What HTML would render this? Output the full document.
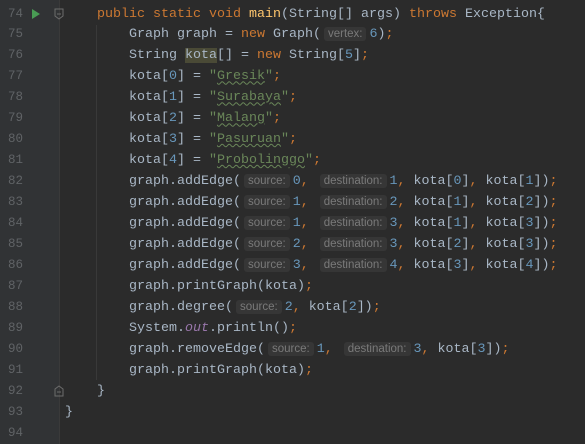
<!DOCTYPE html>
<html><head><style>
body{margin:0;width:585px;height:444px;background:#2b2b2b;overflow:hidden;font-family:"Liberation Mono",monospace;font-size:13.33px;position:relative}
.g{position:absolute;left:0;top:0;width:59px;height:444px;background:#313335;border-right:1px solid #3a3a3a}
.ln{position:absolute;left:0;width:23px;text-align:right;color:#606366;font-size:12.5px;height:21px;line-height:21px}
.l{position:absolute;left:65px;white-space:pre;color:#a9b7c6;height:21px;line-height:21px}
.k{color:#cc7832}.n{color:#6897bb}.s{color:#6a8759}.m{color:#ffc66d}.f{color:#9876aa;font-style:italic}
.h{font-family:"Liberation Sans",sans-serif;font-size:11.5px;color:#7a7a7a;background:#363636;border-radius:3px;padding:1px 4px;margin:0 3px}
.u{text-decoration:underline wavy #6a8759;text-decoration-thickness:1px}
.hl{background:#4a4a36}
.guide{position:absolute;width:1px;background:#393939}
</style></head><body>
<div class="g"></div>
<div class="guide" style="left:96px;top:25px;height:355px"></div>
<svg style="position:absolute;left:54px;top:8px" width="10" height="12"><path d="M1 1H9V8L5 11L1 8Z" fill="none" stroke="#6c6c6c"/><path d="M3 6H7" stroke="#6c6c6c"/></svg>
<svg style="position:absolute;left:31px;top:8px" width="10" height="12"><path d="M1 1L9 6L1 11Z" fill="#499c54"/></svg>
<svg style="position:absolute;left:54px;top:385px" width="10" height="12"><path d="M1 11H9V4L5 1L1 4Z" fill="none" stroke="#6c6c6c"/><path d="M3 7H7" stroke="#6c6c6c"/></svg>
<div id="c"></div>
<script>
var L=[
'    <span class="k">public static void </span><span class="m">main</span>(String[] args) <span class="k">throws </span>Exception{',
'        Graph graph = <span class="k">new </span>Graph(<span class="h">vertex:</span><span class="n">6</span>)<span class="k">;</span>',
'        String <span class="hl">kota</span>[] = <span class="k">new </span>String[<span class="n">5</span>]<span class="k">;</span>',
'        kota[<span class="n">0</span>] = <span class="s">"<span class="u">Gresik</span>"</span><span class="k">;</span>',
'        kota[<span class="n">1</span>] = <span class="s">"<span class="u">Surabaya</span>"</span><span class="k">;</span>',
'        kota[<span class="n">2</span>] = <span class="s">"<span class="u">Malang</span>"</span><span class="k">;</span>',
'        kota[<span class="n">3</span>] = <span class="s">"<span class="u">Pasuruan</span>"</span><span class="k">;</span>',
'        kota[<span class="n">4</span>] = <span class="s">"<span class="u">Probolinggo</span>"</span><span class="k">;</span>'];
var e=[[0,1,0,1],[1,2,1,2],[1,3,1,3],[2,3,2,3],[3,4,3,4]];
e.forEach(function(a){L.push('        graph.addEdge(<span class="h">source:</span><span class="n">'+a[0]+'</span><span class="k">, </span><span class="h">destination:</span><span class="n">'+a[1]+'</span><span class="k">, </span>kota[<span class="n">'+a[2]+'</span>]<span class="k">, </span>kota[<span class="n">'+a[3]+'</span>])<span class="k">;</span>')});
L.push('        graph.printGraph(kota)<span class="k">;</span>');
L.push('        graph.degree(<span class="h">source:</span><span class="n">2</span><span class="k">, </span>kota[<span class="n">2</span>])<span class="k">;</span>');
L.push('        System.<span class="f">out</span>.println()<span class="k">;</span>');
L.push('        graph.removeEdge(<span class="h">source:</span><span class="n">1</span><span class="k">, </span><span class="h">destination:</span><span class="n">3</span><span class="k">, </span>kota[<span class="n">3</span>])<span class="k">;</span>');
L.push('        graph.printGraph(kota)<span class="k">;</span>');
L.push('    }');L.push('}');L.push('');
var h='';
for(var i=0;i<L.length;i++){var t=(3.5+i*20.95).toFixed(2);
h+='<div class="ln" style="top:'+t+'px">'+(74+i)+'</div><div class="l" style="top:'+t+'px">'+L[i]+'</div>';}
document.getElementById('c').innerHTML=h;
</script>
</body></html>
